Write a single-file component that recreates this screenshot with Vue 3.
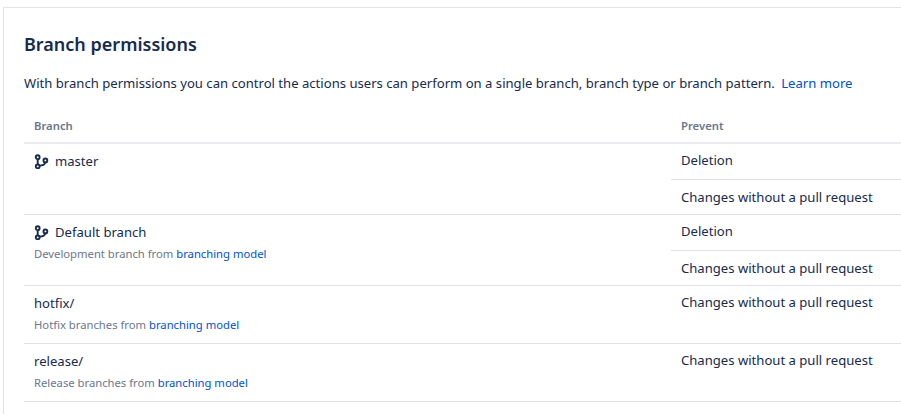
<script setup>
const rows = [
  { name: "master", icon: true, prevent: ["Deletion", "Changes without a pull request"] },
  {
    name: "Default branch",
    icon: true,
    note: "Development branch from ",
    prevent: ["Deletion", "Changes without a pull request"],
  },
  { name: "hotfix/", note: "Hotfix branches from ", prevent: ["Changes without a pull request"] },
  { name: "release/", note: "Release branches from ", prevent: ["Changes without a pull request"] },
];
</script>

<template>
  <div class="page">
    <main class="panel">
      <h1>Branch permissions</h1>
      <p class="intro">
        With branch permissions you can control the actions users can perform on a single branch, branch type or branch pattern.
        <a class="learn">Learn more</a>
      </p>
      <div class="table">
        <div class="head">
          <div class="col-branch">Branch</div>
          <div class="col-prevent">Prevent</div>
        </div>
        <div v-for="row in rows" :key="row.name" class="row">
          <div class="col-branch">
            <div class="name">
              <svg v-if="row.icon" class="icon" width="16" height="16" viewBox="0 0 16 16" fill="none" stroke="#172b4d" stroke-width="1.9">
                <circle cx="3.7" cy="4.2" r="1.9" />
                <circle cx="3.7" cy="13.4" r="1.9" />
                <circle cx="11.4" cy="7.4" r="1.9" />
                <path d="M3.7 6v5.6M5.4 12.6c3.4 0 5.6-.8 6-3.4" />
              </svg>
              {{ row.name }}
            </div>
            <div v-if="row.note" class="note">{{ row.note }}<a>branching model</a></div>
          </div>
          <div class="prevents">
            <div v-for="item in row.prevent" :key="item" class="prevent">{{ item }}</div>
          </div>
        </div>
      </div>
    </main>
  </div>
</template>

<style scoped>
.page {
  width: 901px;
  height: 414px;
  box-sizing: border-box;
  padding: 7px 0 0 3px;
  background: #fff;
  overflow: hidden;
  font-family: "Noto Sans", sans-serif;
  color: #172b4d;
}

.panel {
  height: 100%;
  box-sizing: border-box;
  border-top: 1px solid #e4e4e7;
  border-left: 1px solid #e4e4e7;
  padding: 24px 0 0 20px;
}

h1 {
  margin: 0;
  font-size: 18px;
  line-height: 24px;
  font-weight: 600;
}

.intro {
  margin: 17px 0 0;
  font-size: 13.1px;
  line-height: 20px;
  white-space: nowrap;
}

.learn {
  margin-left: 3px;
}

a {
  color: #0052cc;
}

.head {
  display: flex;
  margin-top: 14px;
  height: 37px;
  box-sizing: border-box;
  padding-top: 2px;
  align-items: center;
  border-bottom: 2px solid #ebecf0;
  font-size: 11.3px;
  font-weight: 600;
  color: #6b778c;
}

.col-branch {
  width: 647px;
  padding-left: 10px;
  box-sizing: border-box;
}

.col-prevent {
  padding-left: 10px;
}

.row {
  display: flex;
  border-bottom: 1px solid #dfe1e6;
}

.name {
  display: flex;
  align-items: center;
  gap: 5px;
  margin-top: 7px;
  font-size: 13.1px;
  line-height: 20px;
}

.note {
  margin-top: 2px;
  margin-bottom: 8px;
  font-size: 11.26px;
  line-height: 20px;
  color: #6b778c;
}

.prevents {
  flex: 1;
}

.prevent {
  height: 35px;
  box-sizing: border-box;
  padding: 6px 0 0 10px;
  font-size: 13.1px;
  line-height: 20px;
}

.prevent + .prevent {
  border-top: 1px solid #dfe1e6;
  padding-top: 7px;
}
</style>
